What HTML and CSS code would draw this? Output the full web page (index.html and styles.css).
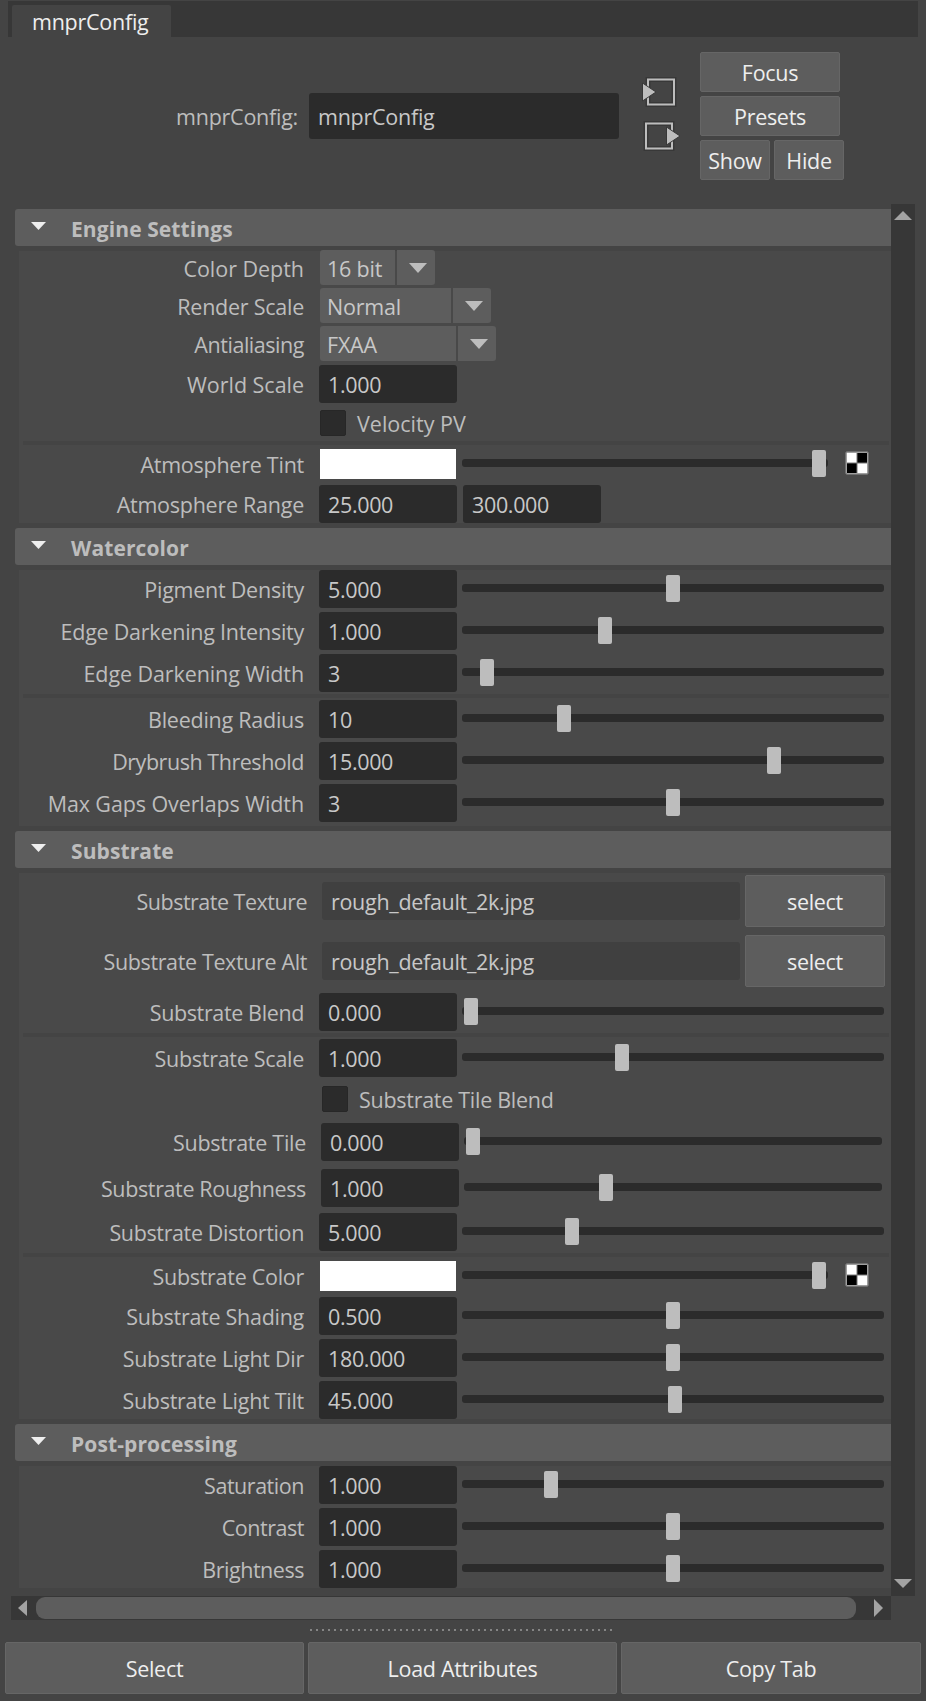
FILE: index.html
```html
<!DOCTYPE html>
<html lang="en">
<head>
<meta charset="utf-8">
<title>mnprConfig</title>
<link rel="stylesheet" href="styles.css">
</head>
<body>
<div class="tabs"><div class="tab">mnprConfig</div></div>
<header class="head">
  <div class="head-label">mnprConfig:</div>
  <div class="head-input">mnprConfig</div>
  <div class="io">
    <svg width="38" height="32" viewBox="0 0 38 32"><path d="M6 2.500H32V27.500H6Z" fill="none" stroke="#383838" stroke-width="5"/><path d="M6 2.500H32V27.500H6Z" fill="none" stroke="#bdbdbd" stroke-width="2"/><path d="M.5 6L14 15L.5 24Z" fill="#bdbdbd" stroke="#383838" stroke-width="1"/></svg>
    <svg width="38" height="32" viewBox="0 0 38 32"><path d="M4 2.500H30V27.500H4Z" fill="none" stroke="#383838" stroke-width="5"/><path d="M4 2.500H30V27.500H4Z" fill="none" stroke="#bdbdbd" stroke-width="2"/><path d="M24.500 6L38 15L24.500 24Z" fill="#bdbdbd" stroke="#383838" stroke-width="1"/></svg>
  </div>
  <div class="head-buttons">
    <button class="btn">Focus</button>
    <button class="btn">Presets</button>
    <div class="pair"><button class="btn">Show</button><button class="btn">Hide</button></div>
  </div>
</header>
<main class="scroll">
  <div class="content">
    <section>
      <h2 class="bar"><i class="fold"></i>Engine Settings</h2>
      <div class="panel">
        <div class="row combo-row first"><label class="wide">Color Depth</label><div class="combo"><span class="w75">16 bit</span><b><i class="down"></i></b></div></div>
        <div class="row combo-row"><label>Render Scale</label><div class="combo"><span class="w131">Normal</span><b><i class="down"></i></b></div></div>
        <div class="row combo-row"><label class="tight">Antialiasing</label><div class="combo"><span class="w136">FXAA</span><b><i class="down"></i></b></div></div>
        <div class="row world"><label class="wide">World Scale</label><div class="num">1.000</div></div>
        <div class="row check-row"><label></label><i class="check"></i><span>Velocity PV</span></div>
        <hr>
        <div class="row color"><label>Atmosphere Tint</label><div class="swatch"></div><div class="slider short"><i style="left:350px"></i></div><svg class="map" width="24" height="24" viewBox="0 0 24 24"><rect x=".5" y=".5" width="23" height="23" rx="2" fill="#a0a0a0" stroke="#707070"/><path d="M2 2H22V22H2Z" fill="#fff"/><path d="M12 2H22V12H12ZM2 12H12V22H2Z" fill="#000"/><path d="M12 2V22M2 12H22" stroke="#777"/></svg></div>
        <div class="row range"><label>Atmosphere Range</label><div class="num">25.000</div><div class="num second">300.000</div></div>
      </div>
    </section>
    <section>
      <h2 class="bar"><i class="fold"></i>Watercolor</h2>
      <div class="panel pad">
        <div class="row"><label>Pigment Density</label><div class="num">5.000</div><div class="slider"><i style="left:204px"></i></div></div>
        <div class="row"><label>Edge Darkening Intensity</label><div class="num">1.000</div><div class="slider"><i style="left:136px"></i></div></div>
        <div class="row"><label class="loose">Edge Darkening Width</label><div class="num">3</div><div class="slider"><i style="left:18px"></i></div></div>
        <hr>
        <div class="row"><label>Bleeding Radius</label><div class="num">10</div><div class="slider"><i style="left:95px"></i></div></div>
        <div class="row"><label class="tight">Drybrush Threshold</label><div class="num">15.000</div><div class="slider"><i style="left:305px"></i></div></div>
        <div class="row"><label class="loose">Max Gaps Overlaps Width</label><div class="num">3</div><div class="slider"><i style="left:204px"></i></div></div>
      </div>
    </section>
    <section class="substrate">
      <h2 class="bar"><i class="fold"></i>Substrate</h2>
      <div class="panel">
        <div class="row file"><label>Substrate Texture</label><div class="path">rough_default_2k.jpg</div><button class="btn">select</button></div>
        <div class="row file alt"><label>Substrate Texture Alt</label><div class="path">rough_default_2k.jpg</div><button class="btn">select</button></div>
        <div class="row"><label class="tight">Substrate Blend</label><div class="num">0.000</div><div class="slider"><i style="left:2px"></i></div></div>
        <hr>
        <div class="row"><label>Substrate Scale</label><div class="num">1.000</div><div class="slider"><i style="left:153px"></i></div></div>
        <div class="row check-row inset tileblend"><label></label><i class="check"></i><span>Substrate Tile Blend</span></div>
        <div class="row inset tile"><label>Substrate Tile</label><div class="num">0.000</div><div class="slider"><i style="left:2px"></i></div></div>
        <div class="row inset rough"><label class="tight">Substrate Roughness</label><div class="num">1.000</div><div class="slider"><i style="left:135px"></i></div></div>
        <div class="row"><label class="tight">Substrate Distortion</label><div class="num">5.000</div><div class="slider"><i style="left:103px"></i></div></div>
        <hr>
        <div class="row color"><label>Substrate Color</label><div class="swatch"></div><div class="slider short"><i style="left:350px"></i></div><svg class="map" width="24" height="24" viewBox="0 0 24 24"><rect x=".5" y=".5" width="23" height="23" rx="2" fill="#a0a0a0" stroke="#707070"/><path d="M2 2H22V22H2Z" fill="#fff"/><path d="M12 2H22V12H12ZM2 12H12V22H2Z" fill="#000"/><path d="M12 2V22M2 12H22" stroke="#777"/></svg></div>
        <div class="row"><label>Substrate Shading</label><div class="num">0.500</div><div class="slider"><i style="left:204px"></i></div></div>
        <div class="row"><label>Substrate Light Dir</label><div class="num">180.000</div><div class="slider"><i style="left:204px"></i></div></div>
        <div class="row"><label>Substrate Light Tilt</label><div class="num">45.000</div><div class="slider"><i style="left:206px"></i></div></div>
      </div>
    </section>
    <section>
      <h2 class="bar"><i class="fold"></i>Post-processing</h2>
      <div class="panel">
        <div class="row"><label class="tight">Saturation</label><div class="num">1.000</div><div class="slider"><i style="left:82px"></i></div></div>
        <div class="row"><label class="tight">Contrast</label><div class="num">1.000</div><div class="slider"><i style="left:204px"></i></div></div>
        <div class="row"><label class="tight">Brightness</label><div class="num">1.000</div><div class="slider"><i style="left:204px"></i></div></div>
      </div>
    </section>
  </div>
  <div class="vbar"><svg width="18" height="9"><path d="M0 9L9 0L18 9Z" fill="#a3a3a3"/></svg><svg width="18" height="9"><path d="M0 0H18L9 9Z" fill="#a3a3a3"/></svg></div>
</main>
<div class="hbar"><svg width="9" height="18"><path d="M9 1L0 9L9 17Z" fill="#a3a3a3"/></svg><div class="thumb"></div><svg width="9" height="18"><path d="M0 0L9 9L0 18Z" fill="#a3a3a3"/></svg></div>
<div class="grip"></div>
<footer class="foot"><button class="btn">Select</button><button class="btn">Load Attributes</button><button class="btn">Copy Tab</button></footer>
</body>
</html>
```
FILE: styles.css
```css
* { box-sizing: border-box; }
body {
  margin: 0; padding-top: 1px; width: 926px; height: 1701px; overflow: hidden;
  background: #444; color: #bdbdbd;
  font: 21.5px/28px "Open Sans", "Noto Sans", sans-serif;
  letter-spacing: -.25px;
}
.tabs { height: 36px; margin: 0 8px; padding: 4px 4px 0; background: #373737; }
.tab { width: 159px; height: 32px; padding-left: 20px; background: #444; color: #eee; line-height: 34px; border-radius: 2px 2px 0 0; }
.head { display: flex; height: 167px; align-items: flex-start; }
.head-label { width: 298px; margin-top: 56px; line-height: 48px; text-align: right; }
.head-input { width: 310px; height: 46px; margin: 56px 0 0 11px; padding-left: 9px; line-height: 48px; background: #2b2b2b; border-radius: 3px; color: #c8c8c8; }
.io { display: flex; flex-direction: column; gap: 12px; margin: 40px 0 0 23px; width: 38px; }
.io svg { display: block; }
.head-buttons { display: flex; flex-direction: column; gap: 4px; margin: 15px 0 0 20px; width: 144px; }
.head-buttons .btn { width: 140px; height: 40px; }
.pair { display: flex; gap: 4px; }
.pair .btn { width: 70px; }
.btn { display: block; margin: 0; padding: 1px 0 0; font: inherit; letter-spacing: -.3px; color: #eee; text-align: center; background: #5d5d5d; border: 1px solid #666; border-radius: 2px; white-space: nowrap; }
.scroll { display: flex; height: 1392px; padding-left: 15px; }
.content { width: 876px; padding-top: 5px; }
.bar { display: flex; height: 37px; margin: 0 0 5px; font-size: 21px; font-weight: 700; letter-spacing: .1px; line-height: 41px; background: #5d5d5d; border-radius: 3px 0 0 3px; }
.fold { width: 15px; height: 8px; margin: 13px 25px 0 16px; background: #eee; clip-path: polygon(0 0, 100% 0, 50% 100%); }
.panel { margin: 0 0 5px 4px; background: #494949; display: flex; flex-direction: column; gap: 4px; }
.pad { padding-bottom: 4px; }
.row { display: flex; height: 38px; }
.row label { width: 285px; margin-right: 15px; text-align: right; line-height: 40px; white-space: nowrap; }
.row .wide { letter-spacing: -.03px; }
.row .loose { letter-spacing: -.1px; }
.substrate label { letter-spacing: -.28px; }
.row .tight { letter-spacing: -.46px; }
.substrate .tight { letter-spacing: -.37px; }
.num { width: 138px; height: 38px; padding-left: 9px; letter-spacing: -.35px; line-height: 40px; background: #2b2b2b; border-radius: 3px; color: #c8c8c8; }
.second { margin-left: 6px; }
.slider { position: relative; width: 422px; height: 8px; margin: 14px 0 0 5px; background: #2b2b2b; border-radius: 3px; }
.slider i { position: absolute; top: -9px; width: 14px; height: 27px; background: #bdbdbd; border-radius: 2px; }
.panel hr { width: 866px; height: 4px; margin: -2px 0 -2px 4px; border: 0; background: #444; }
.combo-row { height: 35px; margin-bottom: -1px; }
.combo-row.first { margin-top: -1px; }
.combo-row label { line-height: 38px; margin-right: 16px; }
.combo { display: flex; gap: 2px; line-height: 38px; }
.combo span, .combo b { display: block; height: 35px; background: #5d5d5d; }
.combo span { padding-left: 7px; border-radius: 3px 0 0 3px; letter-spacing: -.2px; color: #c8c8c8; }
.combo b { width: 38px; padding: 13px 0 0 12px; border-radius: 0 3px 3px 0; }
.down { display: block; width: 18px; height: 10px; background: #bdbdbd; clip-path: polygon(0 0, 100% 0, 50% 100%); }
.w75 { width: 75px; }
.w131 { width: 131px; }
.w136 { width: 136px; }
.world { margin-top: 1px; }
.check-row { height: 26px; margin: 3px 0; }
.check-row label { margin-right: 16px; }
.check { width: 26px; height: 26px; background: #2b2b2b; border: 1px solid #272727; border-radius: 2px; }
.check-row span { margin-left: 11px; line-height: 27px; letter-spacing: 0; }
.substrate .check-row span { letter-spacing: -.28px; }
.color { height: 30px; margin: 2px 0; }
.color label { line-height: 31px; margin-right: 16px; }
.swatch { width: 136px; height: 30px; background: #fff; }
.color .slider { width: 366px; margin: 10px 0 0 6px; }
.map { margin: 2px 0 0 17px; }
.file { height: 52px; margin-top: 2px; margin-bottom: 2px; }
.file label { width: 288px; margin-right: 15px; line-height: 53px; letter-spacing: -.5px; }
.alt label { letter-spacing: -.37px; }
.path { width: 418px; height: 38px; margin: 7px 5px 0 0; padding-left: 9px; letter-spacing: -.3px; line-height: 40px; background: #404040; border-radius: 3px; color: #c8c8c8; }
.file .btn { width: 140px; height: 52px; }
.inset { padding-left: 2px; }
.inset .slider { width: 418px; }
.tileblend { margin: 5px 0 7px; }
.rough { margin: 4px 0 2px; }
.vbar { display: flex; flex-direction: column; justify-content: space-between; width: 24px; padding: 7px 3px 8px; background: #373737; }
.hbar { display: flex; align-items: center; justify-content: space-between; width: 880px; height: 24px; margin-left: 11px; padding: 0 8px 0 7px; background: #373737; }
.thumb { width: 820px; height: 22px; margin: 0 18px 0 9px; background: #5d5d5d; border-radius: 9px; }
.grip { width: 302px; height: 2px; margin: 9px 0 11px 310px; background: repeating-linear-gradient(90deg, #858585 0 2px, transparent 2px 6px); }
.foot { display: flex; gap: 4px; padding-left: 5px; }
.foot .btn { height: 52px; width: 300px; padding: 2px 0 0; }
.foot .btn:first-child { width: 299px; }
.foot .btn:nth-child(2) { width: 309px; }
```
